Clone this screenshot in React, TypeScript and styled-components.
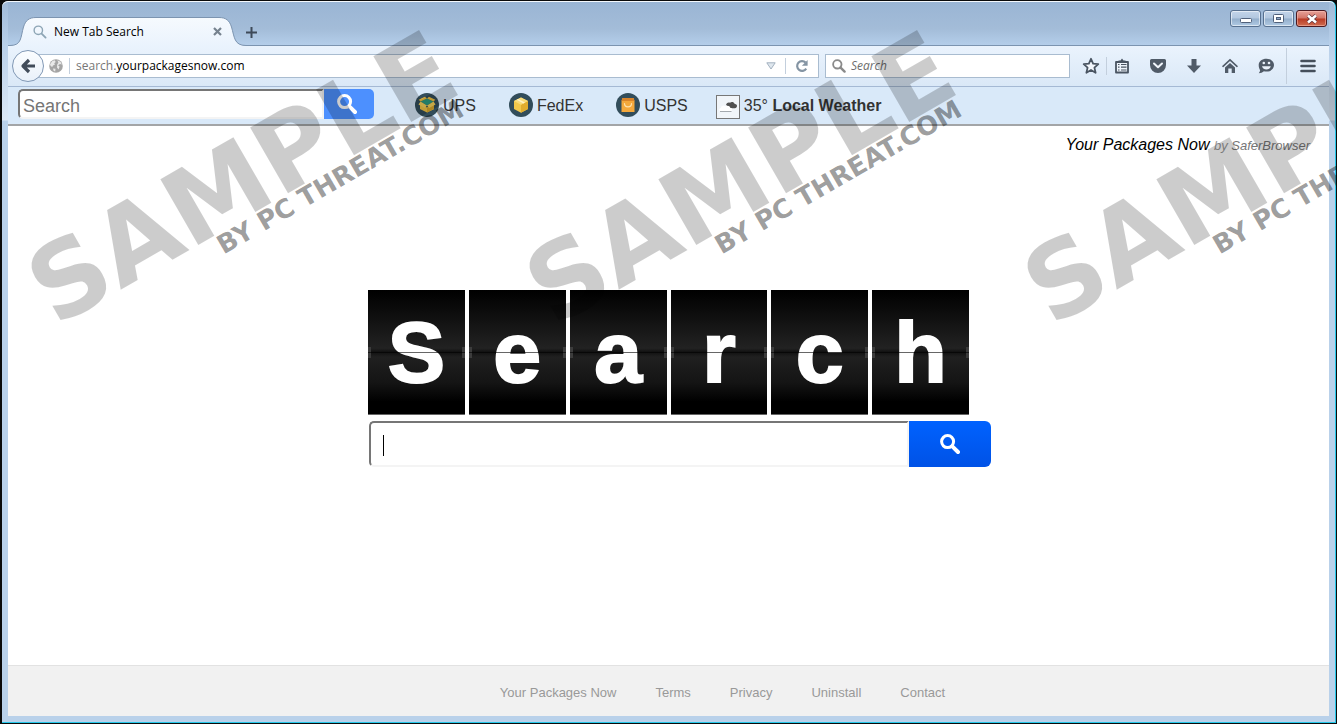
import React from "react";
import styled, { createGlobalStyle, css } from "styled-components";

const uiFont = `"Open Sans", "Noto Sans", sans-serif`;
const pageFont = `"Liberation Sans", Arial, sans-serif`;

const GlobalStyle = createGlobalStyle`
  *, *::before, *::after { box-sizing: border-box; }
  body { margin: 0; background: #000; font-family: ${pageFont}; }
  button { border: 0; padding: 0; background: none; color: inherit; font: inherit; }
  a { color: inherit; text-decoration: none; }
  svg { display: block; flex: none; }
`;

/* ---------- window ---------- */

const Desktop = styled.div`
  position: relative;
  display: flex;
  min-height: 100vh;
  padding: 1px 1px 1px 2px;
  overflow: hidden;
  background: #0a0a0a;
`;

const Frame = styled.div`
  display: flex;
  flex-direction: column;
  flex: 1;
  min-width: 0;
  padding: 0 6px 6px;
  border: solid #25c8ea;
  border-width: 0 1px 1px 0;
  border-radius: 6px 6px 0 0;
  box-shadow: inset 0 1px #f4f8fc;
  background: linear-gradient(#a0bad7 0, #b9d0ea 45px, #dce8f5 119px, #b9d1ea 120px);
`;

const TitleBar = styled.header`
  display: flex;
  align-items: flex-end;
  height: 44px;
  margin-top: 1px;
  background: linear-gradient(#9ab5d4 0, #a3bcd8 60%, #b5cfeb 100%);
  box-shadow: inset 0 -1px #7c94b0;
`;

const Tab = styled.div`
  position: relative;
  display: flex;
  align-items: center;
  width: 236px;
  height: 29px;
  padding: 0 20px 0 25px;
  font: 12px/16px ${uiFont};
  color: #000;
`;

const TabShape = styled.svg`
  position: absolute;
  inset: 0;
`;

const TabTitle = styled.span`
  position: relative;
  flex: 1;
  margin-left: 7px;
  white-space: nowrap;
`;

const TabIcon = styled.span`
  position: relative;
`;

const TabButton = styled.button`
  position: relative;
  display: flex;
  align-items: center;
  justify-content: center;
  width: 14px;
  height: 28px;
`;

const WindowControls = styled.div`
  display: flex;
  align-self: flex-start;
  gap: 2px;
  margin: 8px 2px 0 auto;
`;

const WindowButton = styled.button<{ $danger?: boolean }>`
  display: flex;
  align-items: center;
  justify-content: center;
  width: 31px;
  height: 17px;
  border: 1px solid #57708f;
  border-radius: 3px;
  box-shadow: inset 0 0 0 1px rgba(255, 255, 255, 0.55);
  background: linear-gradient(#c3d4e9 0, #b2c7df 48%, #93aecb 52%, #b0cae4 100%);
  ${(p) =>
    p.$danger &&
    css`
      border-color: #4c1a20;
      box-shadow: inset 0 0 0 1px rgba(255, 200, 190, 0.5);
      background: linear-gradient(#e5a198 0, #d37567 48%, #b93a24 52%, #cf6d50 100%);
    `}
`;

/* ---------- navigation bar ---------- */

const NavBar = styled.nav`
  display: flex;
  align-items: center;
  height: 41px;
  padding-left: 4px;
  border-bottom: 1px solid #a5b9d4;
  background: linear-gradient(#eaf3fd, #dae8f7);
  font: 12px/16px ${uiFont};
  color: #4b5560;
`;

const BackButton = styled.button`
  position: relative;
  display: flex;
  align-items: center;
  justify-content: center;
  flex: none;
  width: 32px;
  height: 32px;
  border: 1px solid #8198b5;
  border-radius: 50%;
  background: linear-gradient(#fbfdff, #e9f1fa);
`;

const Field = styled.div<{ $fixed?: boolean }>`
  display: flex;
  align-items: center;
  height: 24px;
  min-width: 0;
  border: 1px solid #a9bcd0;
  background: #fff;
  ${(p) =>
    p.$fixed
      ? css`
          flex: none;
          width: 245px;
          margin: 0 12px 0 6px;
          padding-left: 6px;
        `
      : css`
          flex: 1;
          margin-left: -10px;
          padding-left: 14px;
        `}
`;

const Separator = styled.span<{ $h: number; $gap?: number }>`
  flex: none;
  width: 1px;
  height: ${(p) => p.$h}px;
  margin: 0 ${(p) => p.$gap ?? 0}px;
  background: #c3cfdd;
`;

const Address = styled.div`
  flex: 1;
  color: #777;
  white-space: nowrap;
  b {
    font-weight: 400;
    color: #000;
  }
`;

const FieldButton = styled.button<{ $w: number }>`
  display: flex;
  align-items: center;
  justify-content: center;
  width: ${(p) => p.$w}px;
  height: 22px;
`;

const EngineInput = styled.input`
  flex: 1;
  min-width: 0;
  padding: 0 5px;
  border: 0;
  outline: 0;
  background: none;
  font: italic 12px/16px ${uiFont};
  &::placeholder {
    color: #6d6d6d;
    opacity: 1;
  }
`;

const NavButtons = styled.div`
  display: flex;
  align-items: center;
`;

const NavGroup = styled.div`
  display: flex;
  margin: 0 2px 0 9px;
`;

const NavButton = styled.button<{ $w?: number }>`
  display: flex;
  align-items: center;
  justify-content: center;
  width: ${(p) => p.$w ?? 36}px;
  height: 32px;
`;

/* ---------- page toolbar ---------- */

const Toolbar = styled.div`
  display: flex;
  align-items: flex-start;
  height: 39px;
  padding: 2px 10px 0;
  border-bottom: 2px solid #a3a5a7;
  background: #d9e9f9;
  font-size: 16px;
  line-height: 26px;
  color: #333;
`;

const SearchForm = styled.form`
  position: relative;
  display: flex;
`;

const SearchInput = styled.input`
  flex: 1;
  min-width: 0;
  padding: 4px 3px 0;
  border: 2px solid;
  border-color: #767676 #f4f4f4 #f4f4f4 #767676;
  border-radius: 5px 0 0 5px;
  outline: 0;
  background: #fff;
  font: 18px ${pageFont};
  &::placeholder {
    color: #757575;
    opacity: 1;
  }
`;

const SearchButton = styled.button<{ $large?: boolean }>`
  display: flex;
  align-items: center;
  justify-content: center;
  color: #fff;
  ${(p) =>
    p.$large
      ? css`
          width: 82px;
          border-radius: 0 6px 6px 0;
          background: linear-gradient(#0062ff, #0052e6);
        `
      : css`
          width: 50px;
          padding-right: 4px;
          border-radius: 0 5px 5px 0;
          background: #4d90fe;
        `}
`;

const ToolbarForm = styled(SearchForm)`
  width: 356px;
  height: 30px;
`;

const Shortcuts = styled.div`
  display: flex;
  gap: 33px;
  margin: 4px 28px 0 41px;
`;

const Shortcut = styled.a`
  display: flex;
  gap: 4px;
  white-space: nowrap;
`;

const Weather = styled(Shortcut)`
  margin-top: 4px;
`;

const WeatherIcon = styled.span`
  display: flex;
  align-items: center;
  justify-content: center;
  width: 24px;
  height: 24px;
  margin-top: 2px;
  border: 1px solid #777;
  background: #f1f5f9;
`;

/* ---------- content ---------- */

const Content = styled.main`
  flex: 1;
  background: #fff;
`;

const Brand = styled.p`
  margin: 0;
  padding: 9px 19px 0;
  text-align: right;
  font: italic 16px/20px ${pageFont};
  color: #000;
  small {
    font-size: 13px;
    color: #999;
  }
  span {
    color: #777;
  }
`;

const Hero = styled.section`
  width: 601px;
  margin: 134px auto 0;
`;

const Tiles = styled.h1`
  display: grid;
  grid-template-columns: repeat(6, 1fr);
  gap: 4px;
  margin: 0;
`;

const Tile = styled.span`
  position: relative;
  height: 125px;
  border-bottom: 1px solid #666;
  background: linear-gradient(#000 0, #222 47%, #111 50%, #202020 54%, #141414 75%, #000 90%);
  text-align: center;
  font: bold 86px/124px ${pageFont};
  -webkit-text-stroke: 2px #fff;
  color: #fff;
  &::after {
    content: "";
    position: absolute;
    inset: 62px 0 auto;
    height: 1px;
    background: rgba(0, 0, 0, 0.6);
  }
  &::before {
    content: "";
    position: absolute;
    inset: 57px 0 auto;
    height: 11px;
    border: solid #3c3c3c;
    border-width: 0 3px;
  }
`;

const MainForm = styled(SearchForm)`
  width: 622px;
  height: 46px;
  margin: 6px 0 0 1px;
`;

const Caret = styled.span`
  position: absolute;
  top: 14px;
  left: 14px;
  width: 1px;
  height: 21px;
  background: #000;
`;

const Footer = styled.footer`
  display: flex;
  justify-content: center;
  gap: 39px;
  height: 51px;
  padding: 17px 0 0 108px;
  border-top: 1px solid #e2e2e2;
  background: #f1f1f1;
  font-size: 13px;
  line-height: 20px;
  color: #999;
`;

/* ---------- watermark ---------- */

const WatermarkLayer = styled.div`
  position: absolute;
  inset: 0;
  display: flex;
  padding: 266px 0 0 20px;
  overflow: hidden;
  pointer-events: none;
`;

const Watermark = styled.div`
  flex: 0 0 498px;
  height: 110px;
  transform: rotate(-30deg);
  transform-origin: 0 0;
  white-space: nowrap;
  font-family: "DejaVu Sans", sans-serif;
  font-weight: 700;
`;

const MarkTitle = styled.div`
  font-size: 104px;
  line-height: 70px;
  color: rgba(0, 0, 0, 0.2);
`;

const MarkSource = styled.div`
  margin-left: 182px;
  font-size: 26px;
  line-height: 26px;
  color: rgba(0, 0, 0, 0.4);
`;

/* ---------- icons ---------- */

const Magnifier = ({ size, color, width }: { size: number; color: string; width: number }) => (
  <svg width={size} height={size} viewBox="0 0 20 20" fill="none" stroke={color} strokeLinecap="round">
    <circle cx="7.6" cy="7.6" r="6" strokeWidth={width} />
    <path d="M12.3 12.3 18 18" strokeWidth={width * 1.3} />
  </svg>
);

const BackArrow = () => (
  <svg width="16" height="16" viewBox="0 0 16 16" fill="none" stroke="#414c5a" strokeWidth="3.2">
    <path d="M15 8H4M9 2 3 8l6 6" strokeLinejoin="round" />
  </svg>
);

const Globe = () => (
  <svg width="14" height="14" viewBox="0 0 14 14">
    <circle cx="7" cy="7" r="6.8" fill="#a5a5a5" />
    <path
      d="M1 5.2 3.4 2 5.6 1.3 6.7 3 5.2 4.2 6 5.6 4 6.4 3.2 8 1.6 7zM8.4 1.2 11.5 2.8 12.8 5.5 11 5 9 6.2 10.6 7.6 9.6 10.6 8 8.5 8.2 5.4 9.4 3.8zM4 9.5 6.5 9.8 6.2 12.4 4.6 11.8z"
      fill="#e9e9e9"
    />
  </svg>
);

const Reload = () => (
  <svg width="14" height="14" viewBox="0 0 14 14" fill="none">
    <path d="M11.2 9.6A4.9 4.9 0 1 1 10.6 3.6" stroke="#8494a3" strokeWidth="2.2" />
    <path d="M12.6 1v5.8H6.9z" fill="#8494a3" />
  </svg>
);

const Star = () => (
  <svg width="18" height="18" viewBox="0 0 18 18">
    <path
      d="M9 1.8 11.1 6.6 16.3 7.1 12.4 10.6 13.6 15.8 9 13 4.4 15.8 5.6 10.6 1.7 7.1 6.9 6.6z"
      fill="#f3f7fc"
      stroke="#4a5562"
      strokeWidth="1.8"
      strokeLinejoin="round"
    />
  </svg>
);

const Clipboard = () => (
  <svg width="16" height="16" viewBox="0 0 16 16">
    <path d="M2 4h12v10.500H2z" fill="#eef4fb" stroke="#4a5562" strokeWidth="1.8" strokeLinejoin="round" />
    <path d="M4.500 4V2.600h2L8 .6 9.500 2.600h2V4z" fill="#4a5562" />
    <path d="M4 6.500h1.500M7 6.500h5.500M4 9.200h1.500M7 9.200h5.500M4 12h1.500M7 12h5.500" stroke="#4a5562" strokeWidth="1.2" />
  </svg>
);

const Pocket = () => (
  <svg width="18" height="16" viewBox="0 0 18 16">
    <path d="M2.5 1h13A1.5 1.5 0 0 1 17 2.5V7A8 8 0 0 1 1 7V2.5A1.5 1.5 0 0 1 2.5 1z" fill="#505b68" />
    <path d="M5 5.5 9 9.3 13 5.5" fill="none" stroke="#f0f5fb" strokeWidth="2" strokeLinecap="round" strokeLinejoin="round" />
  </svg>
);

const Download = () => (
  <svg width="16" height="16" viewBox="0 0 16 16">
    <path d="M5.5 1h5v6.500H15L8 15 1 7.500h4.500z" fill="#505b68" />
  </svg>
);

const Home = () => (
  <svg width="16" height="16" viewBox="0 0 16 16">
    <path d="M1 8.3 8 1.8 15 8.3" fill="none" stroke="#505b68" strokeWidth="1.6" strokeLinecap="round" />
    <path d="M3 9.6 8 5 13 9.6V15H9.700V10.500H6.300V15H3z" fill="#505b68" />
  </svg>
);

const Smile = () => (
  <svg width="18" height="16" viewBox="0 0 18 16">
    <path
      d="M9.500.8C14 .8 17 3.500 17 7.100s-3 6.500-7.500 6.500c-1 0-1.800-.1-2.600-.4C5.500 14.400 3.800 15.200 1.800 15.200c.8-.9 1.200-1.900 1.300-3C2.200 10.800 1.700 9.100 1.700 7.100 1.700 3.500 5 .8 9.500.8z"
      fill="#505b68"
    />
    <circle cx="6.800" cy="5" r="1.300" fill="#eaf2fb" />
    <circle cx="12" cy="5" r="1.300" fill="#eaf2fb" />
    <path d="M5 8.200h8.800c-.7 2.200-2.300 3.300-4.400 3.300S5.700 10.400 5 8.200z" fill="#eaf2fb" />
  </svg>
);

const Menu = () => (
  <svg width="16" height="14" viewBox="0 0 16 14" stroke="#454f5b" strokeWidth="2.6" strokeLinecap="round">
    <path d="M1.500 2h13M1.500 7h13M1.500 12h13" />
  </svg>
);

const UpsIcon = () => (
  <svg width="24" height="24" viewBox="0 0 24 24">
    <circle cx="12" cy="12" r="12" fill="#324d5b" />
    <path d="M5 11 12 14.5 19 11v5l-7 3.500L5 16z" fill="#f2c545" />
    <path d="M12 14.500 19 11v5l-7 3.500z" fill="#dba92c" />
    <path d="M5.500 8.500 12 5.500 18.500 8.500 12 12.500z" fill="#2c9b80" />
    <path d="M5.500 8.500 12 12.500 9.800 15 3.500 11.500zM18.500 8.500 12 12.500 14.200 15 20.500 11.500z" fill="#f8d35a" />
    <path d="M5.500 8.500 3.700 6.800 10 3.700 12 5.500zM18.500 8.500 20.300 6.800 14 3.700 12 5.500z" fill="#efc142" />
  </svg>
);

const FedexIcon = () => (
  <svg width="24" height="24" viewBox="0 0 24 24">
    <circle cx="12" cy="12" r="12" fill="#324d5b" />
    <path d="M12 4.500 19 8v8l-7 3.700L5 16V8z" fill="#f2c84b" />
    <path d="M12 11.700 19 8v8l-7 3.700z" fill="#e1ad2d" />
    <path d="M12 4.500 19 8l-7 3.700L5 8z" fill="#f9dc78" />
    <path d="M7.700 6.700 14.500 10.400 16 9.600 9.200 5.900z" fill="#fff3c4" />
  </svg>
);

const UspsIcon = () => (
  <svg width="24" height="24" viewBox="0 0 24 24">
    <circle cx="12" cy="12" r="12" fill="#324d5b" />
    <path d="M6.500 5h11l1 3v11h-13V8z" fill="#f4a83c" />
    <path d="M6.500 5h11l1 3h-13z" fill="#d98329" />
    <path d="M8.500 10.500c0 4.500 7 4.500 7 0" fill="none" stroke="#fde2ae" strokeWidth="1.2" strokeLinecap="round" />
  </svg>
);

const Cloud = () => (
  <svg width="20" height="14" viewBox="0 0 20 14">
    <path d="M8 4.500C9 2.500 10.500 2 12 2.800 13.500 1.500 16 2 16.500 3.800 18.500 4 19.500 5.500 18.800 7c-.5 1-1.500 1.300-2.600 1.300H11z" fill="#505050" />
    <path d="M3.500 11.300C.5 11.300.5 8.500 2.800 8 3 5.500 6 4.600 7.600 6.300 9.800 5 12 6 12.200 7.800c2.600 0 2.600 3.500 0 3.500z" fill="#fff" />
    <path d="M2 11.500h11.500" stroke="#a4a9ae" />
  </svg>
);

const stop = (e: React.FormEvent) => e.preventDefault();

const shortcuts = [
  { label: "UPS", Icon: UpsIcon },
  { label: "FedEx", Icon: FedexIcon },
  { label: "USPS", Icon: UspsIcon },
];

const navIcons = [
  { label: "Pocket", Icon: Pocket },
  { label: "Downloads", Icon: Download },
  { label: "Home", Icon: Home },
  { label: "Chat", Icon: Smile },
];

const footerLinks = ["Your Packages Now", "Terms", "Privacy", "Uninstall", "Contact"];

const tabEdge =
  "M0 28.5H2C14 28.5 12.5 20 15.5 10C17.5 3.5 21 .5 28 .5H211C218 .5 221.5 3.5 223.5 10C226.5 20 226 28.5 238 28.5";

export default function App() {
  return (
    <Desktop>
      <GlobalStyle />
      <Frame>
        <TitleBar>
          <Tab>
            <TabShape width="240" height="29" viewBox="0 0 240 29" aria-hidden="true">
              <defs>
                <linearGradient id="tab" x1="0" y1="0" x2="0" y2="1">
                  <stop offset="0" stopColor="#f6fafe" />
                  <stop offset="1" stopColor="#eaf3fd" />
                </linearGradient>
              </defs>
              <path d={`${tabEdge}V29H0z`} fill="url(#tab)" />
              <path d="M10 28.5H230" stroke="#eaf3fd" />
              <path d={tabEdge} fill="none" stroke="#7c94b0" />
            </TabShape>
            <TabIcon>
              <Magnifier size={14} color="#8da5b5" width={2} />
            </TabIcon>
            <TabTitle>New Tab Search</TabTitle>
            <TabButton aria-label="Close tab">
              <svg width="9" height="9" viewBox="0 0 9 9" stroke="#76828f" strokeWidth="2.2">
                <path d="M1 1l7 7M8 1 1 8" />
              </svg>
            </TabButton>
          </Tab>
          <TabButton aria-label="New tab">
            <svg width="11" height="11" viewBox="0 0 11 11" stroke="#3e4a59" strokeWidth="2">
              <path d="M5.5 0v11M0 5.5h11" />
            </svg>
          </TabButton>
          <WindowControls>
            <WindowButton aria-label="Minimize">
              <svg width="12" height="9" viewBox="0 0 12 9">
                <rect x=".5" y="4.5" width="11" height="4" rx="1" fill="#fff" stroke="#50607a" />
              </svg>
            </WindowButton>
            <WindowButton aria-label="Restore">
              <svg width="12" height="10" viewBox="0 0 12 10">
                <rect x=".5" y=".5" width="10" height="8" rx="1" fill="#fff" stroke="#50607a" />
                <rect x="3.5" y="3.5" width="4" height="2" fill="#8fa9c8" stroke="#50607a" />
              </svg>
            </WindowButton>
            <WindowButton aria-label="Close" $danger>
              <svg width="12" height="10" viewBox="0 0 12 10" fill="none">
                <path d="M2 1.500l8 7M10 1.500l-8 7" stroke="#5b3038" strokeWidth="4" />
                <path d="M2 1.500l8 7M10 1.500l-8 7" stroke="#fff" strokeWidth="2.6" />
              </svg>
            </WindowButton>
          </WindowControls>
        </TitleBar>

        <NavBar>
          <BackButton aria-label="Back">
            <BackArrow />
          </BackButton>
          <Field>
            <Globe />
            <Separator $h={16} $gap={6} />
            <Address>
              search.<b>yourpackagesnow.com</b>
            </Address>
            <FieldButton $w={28} aria-label="History">
              <svg width="10" height="8" viewBox="0 0 10 8">
                <path d="M.8.8h8.400L5 7z" fill="#dfe7ee" stroke="#a3b1bf" />
              </svg>
            </FieldButton>
            <Separator $h={16} />
            <FieldButton $w={32} aria-label="Reload">
              <Reload />
            </FieldButton>
          </Field>
          <Field $fixed>
            <Magnifier size={14} color="#8a8a8a" width={2.6} />
            <EngineInput aria-label="Search the web" placeholder="Search" />
          </Field>
          <NavButtons>
            <NavButton $w={18} aria-label="Bookmark">
              <Star />
            </NavButton>
            <Separator $h={18} $gap={6} />
            <NavButton $w={18} aria-label="Reading list">
              <Clipboard />
            </NavButton>
            <NavGroup>
              {navIcons.map(({ label, Icon }) => (
                <NavButton key={label} aria-label={label}>
                  <Icon />
                </NavButton>
              ))}
            </NavGroup>
            <Separator $h={36} />
            <NavButton $w={42} aria-label="Menu">
              <Menu />
            </NavButton>
          </NavButtons>
        </NavBar>

        <Toolbar>
          <ToolbarForm onSubmit={stop}>
            <SearchInput aria-label="Search" placeholder="Search" />
            <SearchButton aria-label="Submit search">
              <Magnifier size={20} color="#fff" width={3} />
            </SearchButton>
          </ToolbarForm>
          <Shortcuts>
            {shortcuts.map(({ label, Icon }) => (
              <Shortcut key={label} href="#">
                <Icon />
                {label}
              </Shortcut>
            ))}
          </Shortcuts>
          <Weather href="#">
            <WeatherIcon>
              <Cloud />
            </WeatherIcon>
            <span>
              35° <b>Local Weather</b>
            </span>
          </Weather>
        </Toolbar>

        <Content>
          <Brand>
            Your Packages Now{" "}
            <small>
              by <span>SaferBrowser</span>
            </small>
          </Brand>
          <Hero>
            <Tiles aria-label="Search">
              {Array.from("Search").map((letter) => (
                <Tile key={letter}>{letter}</Tile>
              ))}
            </Tiles>
            <MainForm onSubmit={stop}>
              <SearchInput aria-label="Search query" />
              <Caret />
              <SearchButton $large aria-label="Search">
                <Magnifier size={20} color="#fff" width={3} />
              </SearchButton>
            </MainForm>
          </Hero>
        </Content>

        <Footer>
          {footerLinks.map((label) => (
            <a key={label} href="#">
              {label}
            </a>
          ))}
        </Footer>
      </Frame>

      <WatermarkLayer aria-hidden="true">
        {[0, 1, 2].map((n) => (
          <Watermark key={n}>
            <MarkTitle>SAMPLE</MarkTitle>
            <MarkSource>BY PC THREAT.COM</MarkSource>
          </Watermark>
        ))}
      </WatermarkLayer>
    </Desktop>
  );
}
